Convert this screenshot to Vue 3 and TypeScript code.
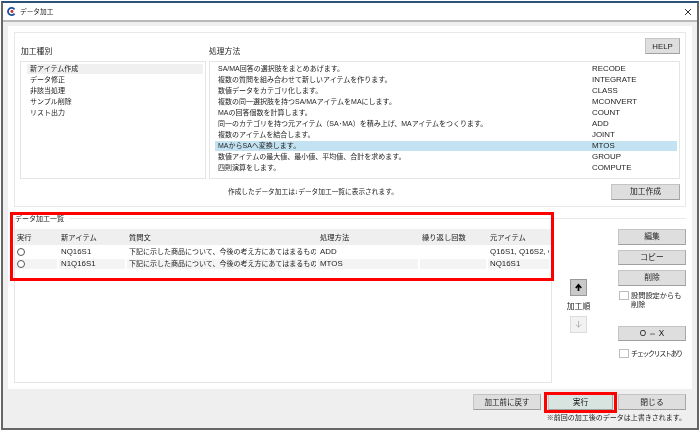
<script setup lang="ts">
const kinds: string[] = ['新アイテム作成', 'データ修正', '非該当処理', 'サンプル削除', 'リスト出力']
const methods: { text: string; code: string; selected?: boolean }[] = [
  { text: 'SA/MA回答の選択肢をまとめあげます。', code: 'RECODE' },
  { text: '複数の質問を組み合わせて新しいアイテムを作ります。', code: 'INTEGRATE' },
  { text: '数値データをカテゴリ化します。', code: 'CLASS' },
  { text: '複数の同一選択肢を持つSA/MAアイテムをMAにします。', code: 'MCONVERT' },
  { text: 'MAの回答個数を計算します。', code: 'COUNT' },
  { text: '同一のカテゴリを持つ元アイテム（SA･MA）を積み上げ、MAアイテムをつくります。', code: 'ADD' },
  { text: '複数のアイテムを結合します。', code: 'JOINT' },
  { text: 'MAからSAへ変換します。', code: 'MTOS', selected: true },
  { text: '数値アイテムの最大値、最小値、平均値、合計を求めます。', code: 'GROUP' },
  { text: '四則演算をします。', code: 'COMPUTE' },
]
const question = '下記に示した商品について、今後の考え方にあてはまるもの'
const rows: { item: string; method: string; source: string; striped?: boolean }[] = [
  { item: 'NQ16S1', method: 'ADD', source: 'Q16S1, Q16S2, Q16S3' },
  { item: 'N1Q16S1', method: 'MTOS', source: 'NQ16S1', striped: true },
]
</script>

<template>
  <div class="page">
    <div class="window">
      <header class="titlebar">
        <svg class="logo" viewBox="0 0 12 12" width="9" height="9">
          <path d="M10 3.2A4.8 4.8 0 1 0 10 8.8" fill="none" stroke="#1d4f9c" stroke-width="2.4" />
          <circle cx="6.6" cy="6" r="1.9" fill="#c8262c" />
        </svg>
        <span class="title">データ加工</span>
        <svg class="close" viewBox="0 0 8 8" width="8" height="8">
          <path d="M1 1L7 7M7 1L1 7" stroke="#333" stroke-width="1" />
        </svg>
      </header>

      <main class="body">
        <div class="sheet">
          <section class="top-group">
            <div class="top-head">
              <span class="kind-label">加工種別</span>
              <span class="method-label">処理方法</span>
              <button class="btn help">HELP</button>
            </div>
            <div class="lists">
              <ul class="list kinds">
                <li v-for="(k, i) in kinds" :key="k" :class="{ active: i === 0 }">{{ k }}</li>
              </ul>
              <ul class="list methods">
                <li v-for="m in methods" :key="m.code" :class="{ selected: m.selected }">
                  <span>{{ m.text }}</span><span class="code">{{ m.code }}</span>
                </li>
              </ul>
            </div>
            <div class="create-row">
              <span class="hint">作成したデータ加工は↓データ加工一覧に表示されます。</span>
              <button class="btn create">加工作成</button>
            </div>
          </section>

          <section class="bottom-group">
            <div class="table-group">
              <span class="legend">データ加工一覧</span>
              <div class="table">
                <div class="grid head">
                  <span>実行</span><span>新アイテム</span><span>質問文</span><span>処理方法</span><span>繰り返し回数</span><span>元アイテム</span>
                </div>
                <div v-for="r in rows" :key="r.item" class="grid row" :class="{ striped: r.striped }">
                  <span class="cell"><i class="radio"></i></span>
                  <span class="cell latin">{{ r.item }}</span>
                  <span class="cell">{{ question }}</span>
                  <span class="cell latin">{{ r.method }}</span>
                  <span class="cell"></span>
                  <span class="cell latin">{{ r.source }}</span>
                </div>
              </div>
            </div>

            <div class="order">
              <button class="arrow">
                <svg viewBox="0 0 10 10" width="9" height="9"><path d="M5 9V2.5M2 5.5L5 2L8 5.5" fill="none" stroke="#000" stroke-width="1.9" /></svg>
              </button>
              <span class="order-label">加工順</span>
              <button class="arrow disabled">
                <svg viewBox="0 0 10 10" width="9" height="9"><path d="M5 1V8M2 5L5 8L8 5" fill="none" stroke="#b5b5b5" stroke-width="1.1" /></svg>
              </button>
            </div>

            <div class="actions">
              <button class="btn action">編集</button>
              <button class="btn action">コピー</button>
              <button class="btn action">削除</button>
              <label class="check"><i class="box"></i><span>設問設定からも<br />削除</span></label>
              <button class="btn action swap">O ⇔ X</button>
              <label class="check list-check"><i class="box"></i><span class="tight">チェックリストあり</span></label>
            </div>
          </section>
        </div>

        <footer class="footer">
          <div class="footer-buttons">
            <button class="btn action back">加工前に戻す</button>
            <button class="btn action run">実行</button>
            <button class="btn action">閉じる</button>
          </div>
          <p class="note">※前回の加工後のデータは上書きされます。</p>
        </footer>
      </main>

      <div class="mark mark-table"></div>
      <div class="mark mark-run"></div>
    </div>
  </div>
</template>

<style scoped>
.page {
  box-sizing: border-box;
  width: 700px;
  height: 432px;
  padding: 1px 1px 2px;
  background: #fff;
  overflow: hidden;
  filter: blur(0.25px);
}
.window {
  position: relative;
  box-sizing: border-box;
  height: 100%;
  display: flex;
  flex-direction: column;
  background: #fff;
  border: 2px solid #666;
  border-top-color: #2b5278;
  font-family: "Liberation Sans", "Noto Sans CJK JP", sans-serif;
  font-size: 7px;
  line-height: 11px;
  color: #222;
}
.titlebar {
  flex: none;
  height: 17px;
  box-sizing: content-box;
  display: flex;
  align-items: center;
  padding: 0 5px 0 4px;
  border-bottom: 2px solid #b9b9b9;
}
.logo { margin-right: 4px; }
.title { font-size: 6.7px; color: #222; }
.close { margin-left: auto; }

.body {
  flex: 1;
  min-height: 0;
  display: flex;
  flex-direction: column;
  padding: 4px 5px 0;
  background: #efefef;
}
.sheet {
  box-sizing: border-box;
  height: 363px;
  padding: 6px;
  background: #fff;
  display: flex;
  flex-direction: column;
}

.top-group {
  box-sizing: border-box;
  height: 175px;
  flex: none;
  padding: 6px 5px 0;
  border: 1px solid #e6e9e9;
  display: flex;
  flex-direction: column;
}
.top-head {
  height: 22px;
  display: flex;
  align-items: flex-end;
}
.kind-label,
.method-label { font-size: 7.8px; padding-bottom: 4px; }
.kind-label { width: 189px; padding-left: 1px; box-sizing: border-box; }
.help {
  margin-left: auto;
  width: 35px;
  height: 16px;
  align-self: flex-start;
  margin-top: -1px;
}

.lists {
  display: flex;
  gap: 3px;
  height: 118px;
}
.list {
  margin: 0;
  padding: 2px;
  list-style: none;
  box-sizing: border-box;
  border: 1px solid #e3e6e6;
  height: 100%;
}
.list li { height: 10px; line-height: 10px; margin-bottom: 1px; }
.kinds { width: 186px; padding-left: 6px; }
.kinds li { padding-left: 3px; }
.kinds li.active { background: #f0f0f0; }
.methods { flex: 1; padding-left: 5px; }
.methods li {
  display: flex;
  justify-content: space-between;
  padding-left: 3px;
}
.methods li.selected { background: #c3e3f3; }
.code {
  width: 85px;
  flex: none;
  font-size: 7.9px;
}

.create-row {
  flex: 1;
  display: flex;
  align-items: center;
  padding-bottom: 2px;
}
.hint { margin-left: 208px; font-size: 6.7px; }
.create { margin-left: auto; width: 69px; height: 16px; }

.bottom-group {
  flex: 1;
  display: flex;
  margin-top: 11px;
  min-height: 0;
  border-top: 1px solid #e6e9e9;
}
.table-group {
  position: relative;
  box-sizing: border-box;
  width: 538px;
  padding-top: 10px;
  border: 1px solid #e3e6e6;
  border-top: 0;
}
.legend {
  position: absolute;
  left: 0;
  top: -6px;
  padding-right: 5px;
  background: #fff;
}
.table { width: 536px; overflow: hidden; }
.grid {
  display: grid;
  grid-template-columns: 44px 68px 191px 102px 68px 63px;
}
.head {
  height: 16px;
  align-items: center;
  background: #efefef;
  font-size: 7.3px;
  margin-bottom: 2px;
}
.head span { padding-left: 2px; }
.row { height: 12px; color: #1c1c1c; }
.cell {
  display: block;
  overflow: hidden;
  white-space: nowrap;
  padding-left: 2px;
  margin-right: 2px;
  line-height: 10px;
  height: 10px;
}
.latin { font-size: 7.9px; }
.striped .cell { background: #f4f4f4; }
.radio {
  display: block;
  width: 8px;
  height: 8px;
  margin-top: 1px;
  box-sizing: border-box;
  border: 1px solid #555;
  border-radius: 50%;
  background: #fff;
}

.order {
  width: 66px;
  flex: none;
  box-sizing: border-box;
  padding: 60px 13px 0 0;
  display: flex;
  flex-direction: column;
  align-items: center;
}
.arrow {
  width: 17px;
  height: 17px;
  padding: 0;
  display: flex;
  align-items: center;
  justify-content: center;
  border: 1px solid #999;
  background: #c9c9c9;
}
.arrow.disabled { border-color: #dcdcdc; background: #f2f2f2; }
.order-label { margin: 5px 0 4px; font-size: 7.8px; }

.actions {
  flex: none;
  width: 68px;
  padding-top: 10px;
  display: flex;
  flex-direction: column;
}
.btn {
  padding: 0;
  box-sizing: border-box;
  border: 1px solid #c4c4c4;
  border-right-color: #a8a8a8;
  border-bottom-color: #a0a0a0;
  background: #dedede;
  font: inherit;
  font-size: 7.8px;
  color: #222;
}
.action { width: 68px; height: 15.5px; flex: none; }
.actions .action + .action { margin-top: 5px; }
.check { display: flex; align-items: flex-start; margin-top: 5px; margin-left: 1px; line-height: 9px; font-size: 7.2px; }
.box {
  flex: none;
  box-sizing: border-box;
  width: 10px;
  height: 9px;
  margin: 0 2px 0 0;
  border: 1px solid #bdbdbd;
  background: #fff;
}
.tight { white-space: nowrap; letter-spacing: -1.55px; }
.actions .swap { margin-top: 17px; font-size: 8.2px; color: #111; }
.list-check { margin-top: 8px; }

.footer { flex: 1; padding-right: 6px; }
.footer-buttons { display: flex; justify-content: flex-end; padding-top: 5px; }
.footer-buttons .action { height: 16px; }
.back { font-size: 7.5px; }
.run { background: #d8e4e0; width: 65px; margin: 0 5px 0 7px; }
.note { margin: 0; text-align: right; line-height: 10px; padding-top: 3px; }

.mark { position: absolute; border: 3px solid #f00; box-sizing: border-box; pointer-events: none; }
.mark-table { left: 7px; top: 209px; width: 544px; height: 69px; }
.mark-run { left: 541px; top: 389px; width: 73px; height: 21px; }
</style>
